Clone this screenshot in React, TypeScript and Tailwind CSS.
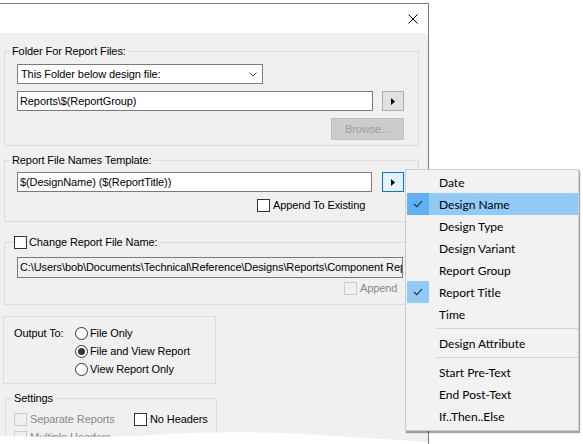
import React from "react"

const menuItems: { label?: string; checked?: boolean; hover?: boolean; sep?: boolean }[] = [
  { label: "Date" },
  { label: "Design Name", checked: true, hover: true },
  { label: "Design Type" },
  { label: "Design Variant" },
  { label: "Report Group" },
  { label: "Report Title", checked: true },
  { label: "Time" },
  { sep: true },
  { label: "Design Attribute" },
  { sep: true },
  { label: "Start Pre-Text" },
  { label: "End Post-Text" },
  { label: "If..Then..Else" },
]

function CheckBox({ disabled = false }: { disabled?: boolean }) {
  return (
    <span
      className={`inline-block w-[13px] h-[13px] shrink-0 border ${
        disabled ? "border-[#cccccc] bg-[#f0f0f0]" : "border-[#333333] bg-white"
      }`}
    />
  )
}

function Radio({ on = false }: { on?: boolean }) {
  return (
    <span className="w-[13px] h-[13px] shrink-0 rounded-full border border-[#333333] bg-white flex items-center justify-center">
      {on && <span className="w-[7px] h-[7px] rounded-full bg-[#333333]" />}
    </span>
  )
}

function Arrow() {
  return (
    <svg width="4" height="7" viewBox="0 0 4 7">
      <path d="M0 0 L4 3.5 L0 7 Z" fill="#000" />
    </svg>
  )
}

function Group({ label, className = "", labelClass = "ml-[5px]", children }: { label: React.ReactNode; className?: string; labelClass?: string; children: React.ReactNode }) {
  return (
    <div className={`border border-[#dcdcdc] ${className}`}>
      <div className={`-mt-[7px] w-fit px-[2px] bg-[#f0f0f0] leading-[13px] ${labelClass}`}>{label}</div>
      {children}
    </div>
  )
}

export default function App() {
  return (
    <div className="relative w-[583px] h-[444px] bg-white overflow-hidden font-['Liberation_Sans',Arial,sans-serif] text-[11px] leading-[13px] tracking-[-0.1px] text-black">
      {/* Dialog */}
      <div className="mt-[3px] w-[429px] h-[441px] border-t border-r border-[#7a7a7a] flex flex-col">
        <div className="h-[29px] bg-white flex items-center justify-end pr-[10px] shrink-0">
          <svg width="10" height="10" viewBox="0 0 10 10">
            <path d="M0.5 0.5 L9.5 9.5 M9.5 0.5 L0.5 9.5" stroke="#000" strokeWidth="1" />
          </svg>
        </div>

        <div className="flex-1 bg-[#f0f0f0] pl-[4px] pt-[18px]">
          {/* Folder */}
          <Group label="Folder For Report Files:" className="w-[415px] pb-[5px]">
            <div className="pl-[12px]">
              <div className="mt-[6px] w-[246px] h-[20px] border border-[#7a7a7a] bg-white flex items-center justify-between pl-[3px] pr-[5px]">
                <span>This Folder below design file:</span>
                <svg width="8" height="5" viewBox="0 0 8 5">
                  <path d="M0.5 0.5 L4 4 L7.5 0.5" stroke="#555" fill="none" strokeWidth="1" />
                </svg>
              </div>
              <div className="mt-[7px] flex gap-[9px]">
                <div className="w-[356px] h-[20px] border border-[#7a7a7a] bg-white flex items-center pl-[2px]">
                  Reports\$(ReportGroup)
                </div>
                <div className="w-[22px] h-[20px] border border-[#adadad] bg-[#e1e1e1] flex items-center justify-center">
                  <Arrow />
                </div>
              </div>
              <div className="mt-[7px] w-[387px] flex justify-end">
                <div className="w-[73px] h-[22px] border border-[#bfbfbf] bg-[#cccccc] text-[#a0a0a0] flex items-center justify-center">
                  Browse...
                </div>
              </div>
            </div>
          </Group>

          {/* Template */}
          <Group label="Report File Names Template:" className="mt-[14px] w-[415px] pb-[9px]">
            <div className="pl-[12px]">
              <div className="mt-[5px] flex gap-[10px]">
                <div className="w-[355px] h-[20px] border border-[#7a7a7a] bg-white flex items-center pl-[2px]">
                  $(DesignName) ($(ReportTitle))
                </div>
                <div className="w-[22px] h-[20px] border border-[#0078d7] bg-[#e5f1fb] flex items-center justify-center">
                  <Arrow />
                </div>
              </div>
              <div className="mt-[7px] ml-[240px] flex items-center gap-[3px] h-[13px]">
                <CheckBox />
                <span>Append To Existing</span>
              </div>
            </div>
          </Group>

          {/* Change name */}
          <Group
            label={
              <span className="flex items-center gap-[2px]">
                <CheckBox />
                <span>Change Report File Name:</span>
              </span>
            }
            labelClass="ml-[9px] !pl-0"
            className="mt-[20px] w-[415px] pb-[9px]"
          >
            <div className="pl-[12px]">
              <div className="mt-[8px] w-[386px] h-[21px] border border-[#7a7a7a] bg-[#f0f0f0] flex items-center pl-[2px] overflow-hidden whitespace-nowrap">
                C:\Users\bob\Documents\Technical\Reference\Designs\Reports\Component Reports
              </div>
              <div className="mt-[4px] ml-[327px] flex items-center gap-[3px] h-[13px] text-[#8a8a8a]">
                <CheckBox disabled />
                <span>Append</span>
              </div>
            </div>
          </Group>

          {/* Output */}
          <div className="mt-[11px] -ml-[1px] w-[213px] h-[68px] border border-[#dcdcdc] flex pl-[10px] pt-[7px]">
            <div className="w-[61px] h-[18px] flex items-center">Output To:</div>
            <div className="flex flex-col">
              {["File Only", "File and View Report", "View Report Only"].map((t, i) => (
                <div key={t} className="h-[18px] flex items-center gap-[2px]">
                  <Radio on={i === 1} />
                  <span>{t}</span>
                </div>
              ))}
            </div>
          </div>

          {/* Settings */}
          <Group label="Settings" labelClass="ml-[6px]" className="mt-[14px] ml-[1px] w-[212px] h-[80px]">
            <div className="pl-[8px]">
              <div className="mt-[8px] flex items-center h-[13px]">
                <div className="w-[120px] flex items-center gap-[3px] text-[#8a8a8a]">
                  <CheckBox disabled />
                  <span>Separate Reports</span>
                </div>
                <div className="flex items-center gap-[3px]">
                  <CheckBox />
                  <span>No Headers</span>
                </div>
              </div>
              <div className="mt-[5px] flex items-center gap-[3px] h-[13px] text-[#8a8a8a]">
                <CheckBox disabled />
                <span>Multiple Headers</span>
              </div>
            </div>
          </Group>
        </div>
      </div>

      {/* Torn bottom edge */}
      <svg className="absolute left-0 top-[428px]" width="428" height="16" viewBox="0 0 428 16">
        <path
          d="M0 8 C20 8 40 9 60 9 S100 9 120 8.5 S160 6 190 5 S250 4 280 5 S320 7 350 9 S400 12 428 14 L428 16 L0 16 Z"
          fill="#ffffff"
        />
      </svg>

      {/* Dropdown menu */}
      <div className="absolute left-[405px] top-[169px] w-[174px] h-[262px] border border-[#cccccc] bg-[#f2f2f2] pt-[1px] pl-[1px] shadow-[1px_2px_1px_rgba(0,0,0,0.35)] font-['Lato','Noto_Sans',sans-serif] text-[12px] tracking-normal">
        {menuItems.map((m, i) =>
          m.sep ? (
            <div key={i} className="h-[7px] flex items-center pl-[29px]">
              <div className="w-[142px] h-px bg-[#d4d4d4]" />
            </div>
          ) : (
            <div key={i} className={`h-[22px] w-[171px] flex items-center ${m.hover ? "bg-[#91c9f7]" : ""}`}>
              <div className={`w-[22px] h-[22px] flex items-center justify-center ${m.checked ? (m.hover ? "bg-[#5eb2f5]" : "bg-[#91c9f7]") : ""}`}>
                {m.checked && (
                  <svg width="10" height="8" viewBox="0 0 10 8">
                    <path d="M1 4 L3.8 6.6 L9 1.2" stroke="#333" strokeWidth="1.2" fill="none" />
                  </svg>
                )}
              </div>
              <span className="ml-[10px]">{m.label}</span>
            </div>
          )
        )}
      </div>
    </div>
  )
}
